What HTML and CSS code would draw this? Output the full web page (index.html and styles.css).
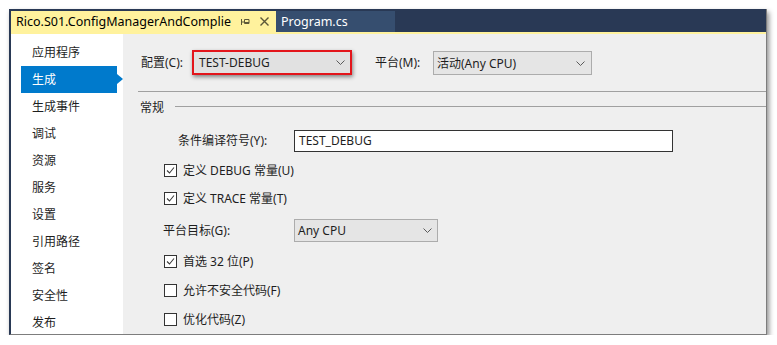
FILE: index.html
```html
<!DOCTYPE html>
<html lang="zh-CN">
<head>
<meta charset="utf-8">
<title>Rico.S01.ConfigManagerAndComplie</title>
<link rel="stylesheet" href="styles.css">
</head>
<body>
<div class="window">
  <div class="tabbar">
    <div class="tab tab-active">
      <span class="tab-title">Rico.S01.ConfigManagerAndComplie</span>
      <svg class="pin" width="10" height="8" viewBox="0 0 10 8"><path d="M1.5 1V7M1.5 4H4.5M4.5 1.5H9V5.5H4.5ZM4.5 4.5H9" fill="none" stroke="#5c5838" stroke-width="1"/></svg>
      <svg class="close" width="9" height="9" viewBox="0 0 9 9"><path d="M0.5 0.5L8.5 8.5M8.5 0.5L0.5 8.5" fill="none" stroke="#5c5838" stroke-width="1.4"/></svg>
    </div>
    <div class="tab tab-inactive">Program.cs</div>
  </div>
  <div class="tabline"></div>
  <div class="body">
    <nav class="nav">
      <div class="nav-item">应用程序</div>
      <div class="nav-item selected">生成</div>
      <div class="nav-item">生成事件</div>
      <div class="nav-item">调试</div>
      <div class="nav-item">资源</div>
      <div class="nav-item">服务</div>
      <div class="nav-item">设置</div>
      <div class="nav-item">引用路径</div>
      <div class="nav-item">签名</div>
      <div class="nav-item">安全性</div>
      <div class="nav-item">发布</div>
    </nav>
    <main class="content">
      <div class="config-row">
        <span class="lbl lbl-config">配置(C):</span>
        <div class="select select-red">
          <span>TEST-DEBUG</span>
          <svg class="chev" width="9" height="5" viewBox="0 0 9 5"><polyline points="0.5,0.5 4.5,4.5 8.5,0.5" fill="none" stroke="#5a5a5a"/></svg>
        </div>
        <span class="lbl lbl-platform">平台(M):</span>
        <div class="select select-platform">
          <span>活动(Any CPU)</span>
          <svg class="chev" width="9" height="5" viewBox="0 0 9 5"><polyline points="0.5,0.5 4.5,4.5 8.5,0.5" fill="none" stroke="#5a5a5a"/></svg>
        </div>
      </div>
      <div class="sep"></div>
      <div class="group-head">
        <span>常规</span>
        <div class="group-line"></div>
      </div>
      <div class="row row-symbols">
        <span class="lbl lbl-symbols">条件编译符号(Y):</span>
        <div class="textbox">TEST_DEBUG</div>
      </div>
      <div class="row check-row cr1">
        <span class="box"><svg width="11" height="11" viewBox="0 0 11 11"><polyline points="2,5.5 4.5,8 9,2.5" fill="none" stroke="#3c3c3c" stroke-width="1.1"/></svg></span>
        <span>定义 DEBUG 常量(U)</span>
      </div>
      <div class="row check-row cr2">
        <span class="box"><svg width="11" height="11" viewBox="0 0 11 11"><polyline points="2,5.5 4.5,8 9,2.5" fill="none" stroke="#3c3c3c" stroke-width="1.1"/></svg></span>
        <span>定义 TRACE 常量(T)</span>
      </div>
      <div class="row row-target">
        <span class="lbl lbl-target">平台目标(G):</span>
        <div class="select select-target">
          <span>Any CPU</span>
          <svg class="chev" width="9" height="5" viewBox="0 0 9 5"><polyline points="0.5,0.5 4.5,4.5 8.5,0.5" fill="none" stroke="#5a5a5a"/></svg>
        </div>
      </div>
      <div class="row check-row cr3">
        <span class="box"><svg width="11" height="11" viewBox="0 0 11 11"><polyline points="2,5.5 4.5,8 9,2.5" fill="none" stroke="#3c3c3c" stroke-width="1.1"/></svg></span>
        <span>首选 32 位(P)</span>
      </div>
      <div class="row check-row cr4">
        <span class="box"></span>
        <span>允许不安全代码(F)</span>
      </div>
      <div class="row check-row cr5">
        <span class="box"></span>
        <span>优化代码(Z)</span>
      </div>
    </main>
  </div>
</div>
</body>
</html>
```

FILE: styles.css
```css
* { box-sizing: border-box; }

html, body {
  margin: 0;
  padding: 0;
  background: #ffffff;
}

body {
  font-family: "Noto Sans", "Noto Sans CJK SC", sans-serif;
  font-size: 12px;
  color: #1e1e1e;
  overflow: hidden;
}

.window {
  margin: 9px 0 0 9px;
  width: 758px;
  height: 326px;
  border-left: 2px solid #293955;
  border-right: 1px solid #7d7d7d;
  border-bottom: 1px solid #7d7d7d;
  box-shadow: 2px 3px 5px rgba(0, 0, 0, 0.45);
  display: flex;
  flex-direction: column;
  overflow: hidden;
  background: #efefef;
}

.tabbar {
  height: 23px;
  background: #293955;
  padding-top: 2px;
  display: flex;
  flex-shrink: 0;
}

.tab {
  height: 21px;
  display: flex;
  align-items: center;
  padding-left: 5px;
  font-size: 12.5px;
  line-height: 21px;
  white-space: nowrap;
}

.tab-active {
  width: 265px;
  background: #fff29d;
  color: #000000;
}

.tab-title {
  flex: 1;
}

.pin {
  margin-right: 10px;
}

.close {
  margin-right: 7px;
}

.tab-inactive {
  width: 119px;
  background: #364e6f;
  color: #ffffff;
}

.tabline {
  height: 2px;
  background: #fff29d;
  flex-shrink: 0;
}

.body {
  flex: 1;
  display: flex;
  min-height: 0;
  overflow: hidden;
}

.nav {
  width: 112px;
  flex-shrink: 0;
  background: #ffffff;
  padding-top: 5px;
}

.nav-item {
  position: relative;
  margin-left: 10px;
  width: 96px;
  height: 27px;
  line-height: 27px;
  padding-left: 11px;
  white-space: nowrap;
}

.nav-item.selected {
  background: #007acc;
  color: #ffffff;
}

.nav-item.selected::after {
  content: "";
  position: absolute;
  right: -6px;
  top: 8px;
  border-top: 5.5px solid transparent;
  border-bottom: 5.5px solid transparent;
  border-left: 6px solid #007acc;
}

.content {
  flex: 1;
  padding-left: 15px;
  padding-top: 16px;
  display: flex;
  flex-direction: column;
  white-space: nowrap;
}

.config-row {
  height: 25px;
  display: flex;
  align-items: center;
}

.lbl {
  line-height: 16px;
}

.lbl-config {
  margin-left: 3px;
  width: 51px;
}

.lbl-platform {
  margin-left: 23px;
  width: 58px;
}

.select {
  display: flex;
  align-items: center;
  justify-content: space-between;
  background: #e5e5e5;
  border: 1px solid #acacac;
}

.select-red {
  width: 160px;
  height: 25px;
  border: 2px solid #e3151b;
  background: #e1e1e1;
  padding: 0 5px 0 5px;
  box-shadow: 1px 2px 4px rgba(0, 0, 0, 0.45);
}

.select-platform {
  width: 159px;
  height: 24px;
  margin-top: 1px;
  padding: 0 6px 0 3px;
}

.select-target {
  width: 144px;
  height: 23px;
  padding: 0 5px 0 3px;
}

.sep {
  height: 1px;
  background: #a0a0a0;
  margin-top: 16px;
}

.group-head {
  margin-top: 6px;
  height: 18px;
  display: flex;
  align-items: center;
  padding-left: 2px;
}

.group-line {
  flex: 1;
  height: 1px;
  background: #a0a0a0;
  margin-left: 11px;
  margin-top: -1px;
}

.row {
  display: flex;
  align-items: center;
}

.row-symbols {
  margin-top: 14px;
  height: 22px;
}

.lbl-symbols {
  margin-left: 40px;
  width: 116px;
}

.textbox {
  width: 379px;
  height: 22px;
  background: #ffffff;
  border: 1px solid #333333;
  padding-left: 4px;
  line-height: 20px;
}

.check-row {
  height: 20px;
  padding-left: 26px;
}

.cr1 { margin-top: 8px; }
.cr2 { margin-top: 8px; }
.cr3 { margin-top: 9px; }
.cr4 { margin-top: 9px; }
.cr5 { margin-top: 9px; }

.box {
  width: 13px;
  height: 13px;
  border: 1px solid #333333;
  background: #ffffff;
  margin-right: 6px;
  display: flex;
  align-items: center;
  justify-content: center;
}

.box svg {
  display: block;
}

.row-target {
  margin-top: 11px;
  height: 23px;
}

.lbl-target {
  margin-left: 25px;
  width: 131px;
}
```
